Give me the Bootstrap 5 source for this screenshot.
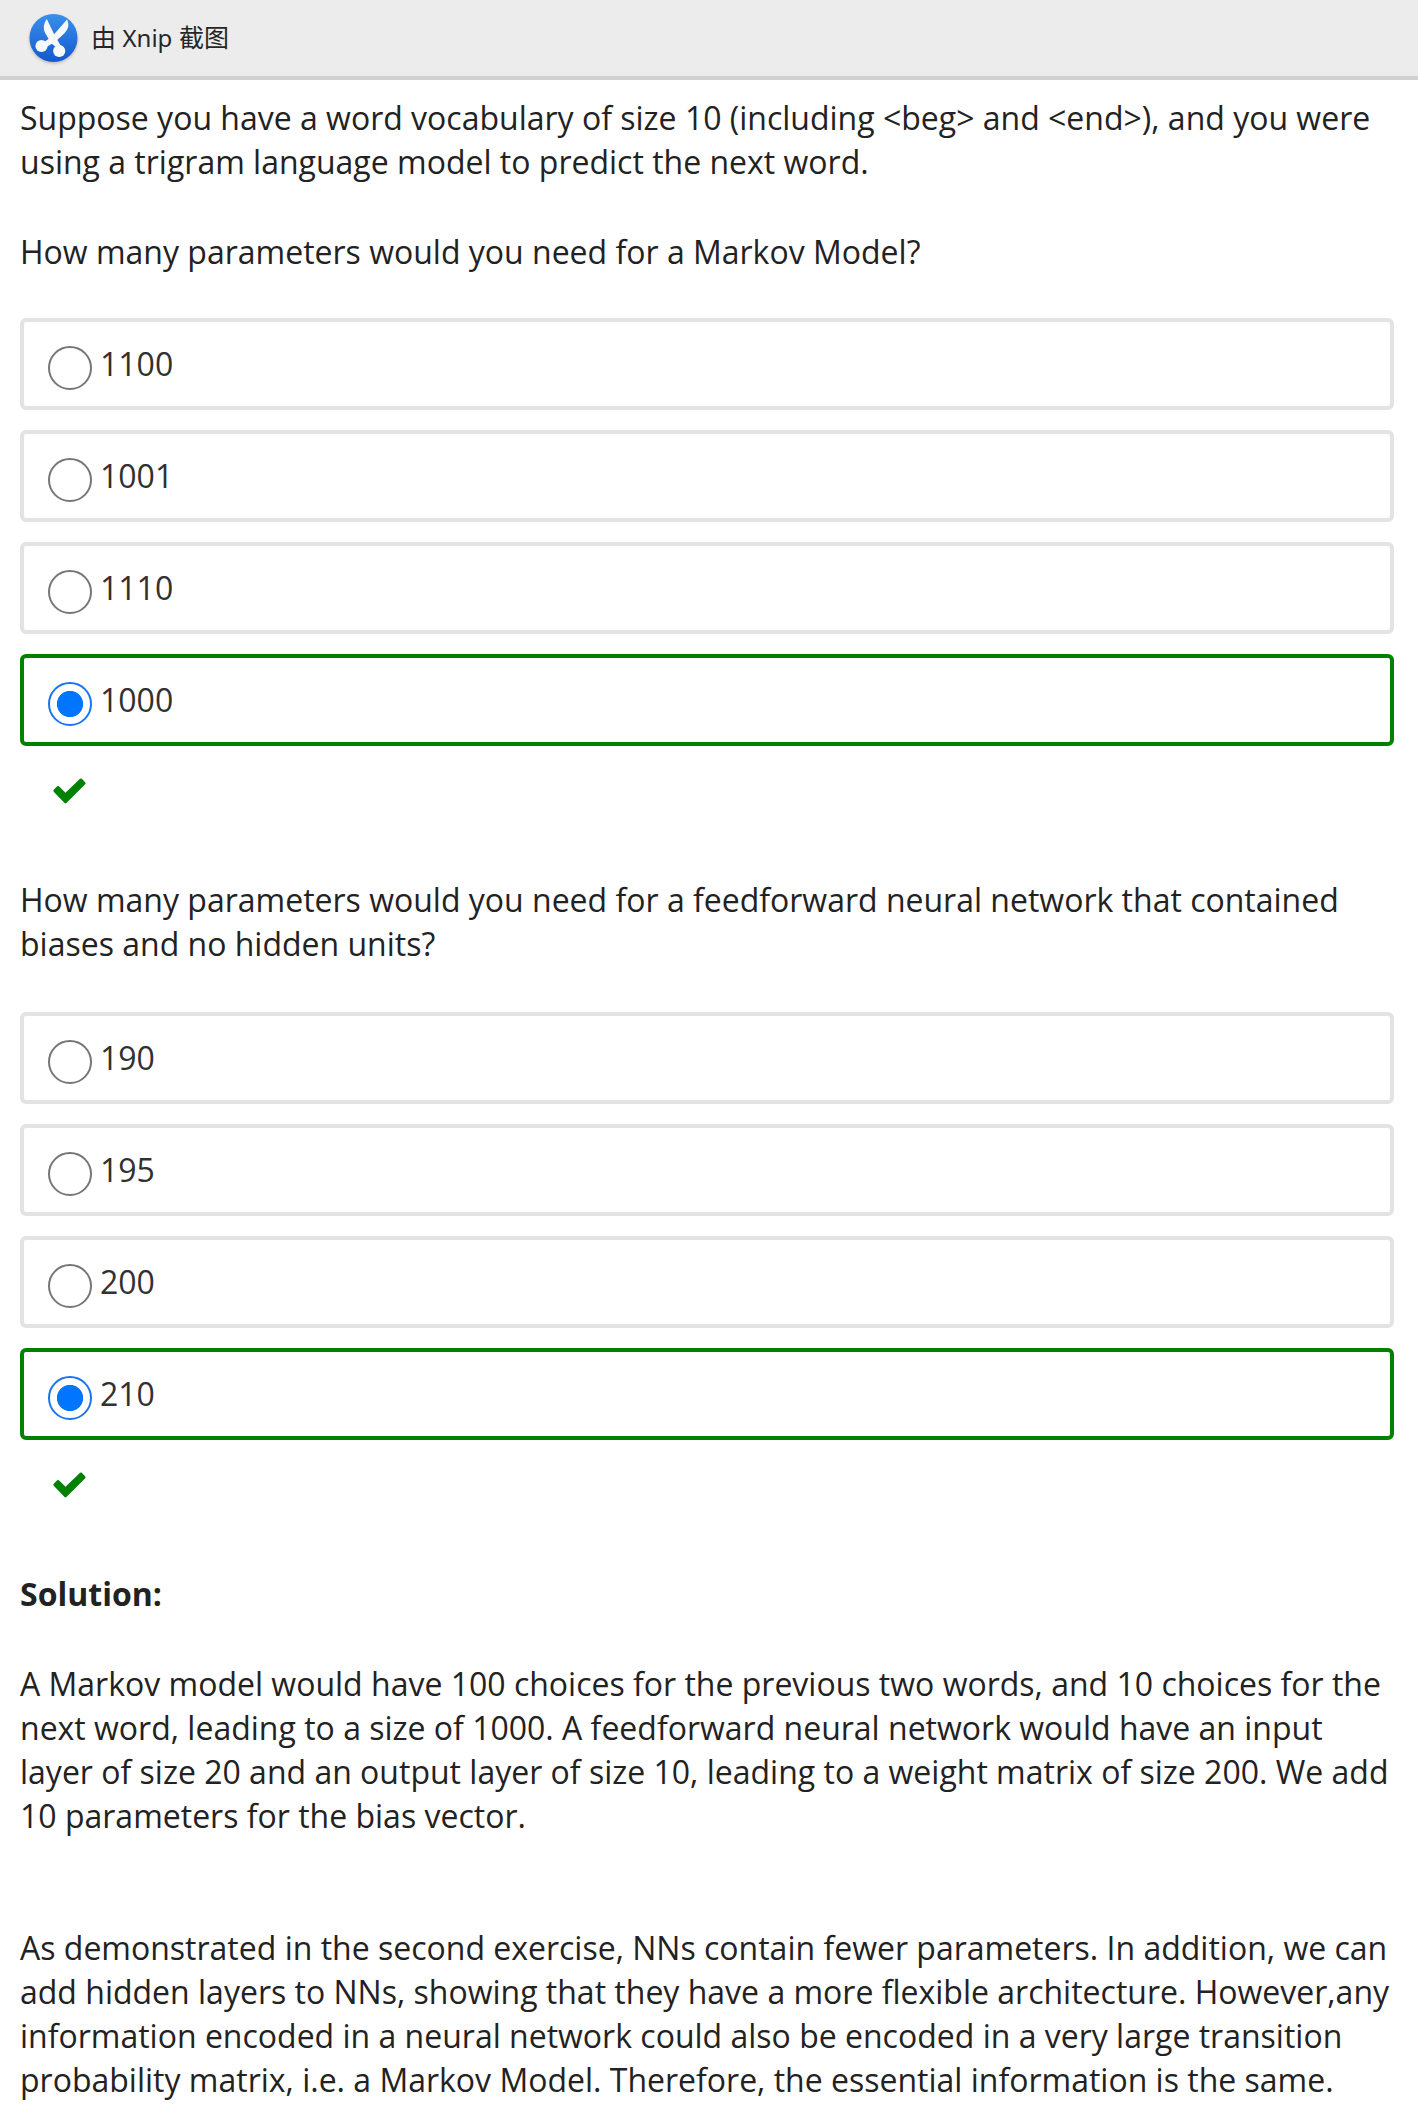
<!DOCTYPE html>
<html lang="en">
<head>
<meta charset="utf-8">
<meta name="viewport" content="width=device-width, initial-scale=1">
<title>Trigram language model quiz</title>
<link href="https://cdn.jsdelivr.net/npm/bootstrap@5.3.0/dist/css/bootstrap.min.css" rel="stylesheet">
<style>
body{font-family:"Open Sans",sans-serif;font-size:32px;line-height:44px;color:#222;background:#fff;overflow-x:hidden}
.capture-bar{height:80px;background:#ececec;border-bottom:4px solid #d0d0d0;padding-left:24px;gap:7px;color:#262626}
.capture-text{font:25px/36px "Noto Sans","Noto Sans CJK SC",sans-serif;white-space:pre;padding-bottom:1px}
.latin{font-size:24px}
.quiz{padding:16px 24px 0 20px;white-space:nowrap}
.para-gap{margin-bottom:46px}
.choices{gap:20px;padding-top:44px}
.choices.after-long{padding-top:46px}
.choice{height:92px;border:4px solid #e3e3e3;border-radius:6px;padding:20px 0 0 24px;gap:8px;color:#313131}
.choice.correct{border-color:#008100}
.choice input{appearance:none;flex:none;width:44px;height:44px;margin:4px 0 0;border:2px solid #767676;border-radius:50%;background:#fff}
.choice input:checked{border-color:#1a75f0;background:radial-gradient(circle,#0075ff 12.7px,#fff 13.5px)}
.verdict{height:132px;padding:32px 0 0 32.5px}
.verdict svg{display:block}
</style>
<script src="https://cdn.jsdelivr.net/npm/bootstrap@5.3.0/dist/js/bootstrap.bundle.min.js"></script>
</head>
<body>
<header class="capture-bar d-flex align-items-center">
<svg width="60" height="60" viewBox="0 0 60 60" class="flex-shrink-0" aria-hidden="true">
<defs>
<linearGradient id="disc" x1="0" y1="0" x2="0" y2="1"><stop offset="0" stop-color="#3990ea"/><stop offset="1" stop-color="#1458cf"/></linearGradient>
<filter id="soft" x="-20%" y="-20%" width="140%" height="140%"><feGaussianBlur stdDeviation="1.5"/></filter>
</defs>
<circle cx="29.5" cy="31.5" r="24" fill="#8b8b8b" opacity=".55" filter="url(#soft)"/>
<circle cx="29.5" cy="30" r="24" fill="url(#disc)"/>
<g fill="#f6f8fc">
<path d="M22.800 11C19 16 19 22 22 26.500L27 35L33 40L37 38L31 28Z"/>
<path d="M43 11.500C45.500 16.500 44.500 21 40.500 25.200L31.500 33.500L22.500 39L19 35L29 27.500Z"/>
<circle cx="17.500" cy="38" r="6.100"/><circle cx="35.200" cy="43" r="6.100"/>
</g>
</svg>
<span class="capture-text">由 <span class="latin">Xnip</span> 截图</span>
</header>
<main class="quiz">
<p class="para-gap">Suppose you have a word vocabulary of size 10 (including &lt;beg&gt; and &lt;end&gt;), and you were<br>using a trigram language model to predict the next word.</p>
<p class="mb-0">How many parameters would you need for a Markov Model?</p>
<div class="choices d-flex flex-column">
<label class="choice d-flex align-items-start"><input type="radio" name="markov"><span>1100</span></label>
<label class="choice d-flex align-items-start"><input type="radio" name="markov"><span>1001</span></label>
<label class="choice d-flex align-items-start"><input type="radio" name="markov"><span>1110</span></label>
<label class="choice correct d-flex align-items-start"><input type="radio" name="markov" checked><span>1000</span></label>
</div>
<div class="verdict"><svg width="33" height="26" viewBox="0 0 33 26" role="img" aria-label="correct"><path d="M0.700 11.800L4.200 8.300Q5 7.500 5.900 8.300L12.500 14.800L27 .8Q27.900 0 28.800 .8L32.300 4.400Q33 5.300 32.200 6.200L13.400 25Q12.500 25.800 11.600 25L.7 13.700Q0 12.700 .7 11.800Z" fill="#008100"/></svg></div>
<p class="mb-0">How many parameters would you need for a feedforward neural network that contained<br>biases and no hidden units?</p>
<div class="choices after-long d-flex flex-column">
<label class="choice d-flex align-items-start"><input type="radio" name="network"><span>190</span></label>
<label class="choice d-flex align-items-start"><input type="radio" name="network"><span>195</span></label>
<label class="choice d-flex align-items-start"><input type="radio" name="network"><span>200</span></label>
<label class="choice correct d-flex align-items-start"><input type="radio" name="network" checked><span>210</span></label>
</div>
<div class="verdict"><svg width="33" height="26" viewBox="0 0 33 26" role="img" aria-label="correct"><path d="M0.700 11.800L4.200 8.300Q5 7.500 5.900 8.300L12.500 14.800L27 .8Q27.900 0 28.800 .8L32.300 4.400Q33 5.300 32.200 6.200L13.400 25Q12.500 25.800 11.600 25L.7 13.700Q0 12.700 .7 11.800Z" fill="#008100"/></svg></div>
<p class="para-gap fw-bold">Solution:</p>
<p class="mb-0">A Markov model would have 100 choices for the previous two words, and 10 choices for the<br>next word, leading to a size of 1000. A feedforward neural network would have an input<br>layer of size 20 and an output layer of size 10, leading to a weight matrix of size 200. We add<br>10 parameters for the bias vector.<br><br><br>As demonstrated in the second exercise, NNs contain fewer parameters. In addition, we can<br>add hidden layers to NNs, showing that they have a more flexible architecture. However,any<br>information encoded in a neural network could also be encoded in a very large transition<br>probability matrix, i.e. a Markov Model. Therefore, the essential information is the same.</p>
</main>
</body>
</html>
